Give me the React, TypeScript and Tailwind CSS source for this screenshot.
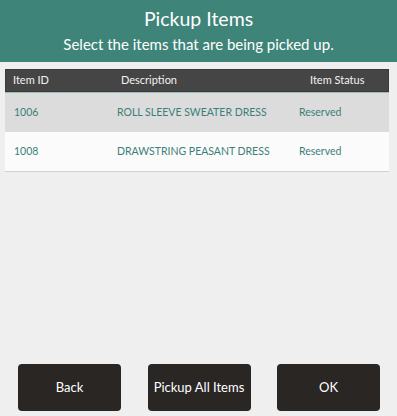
import React from 'react';

const items = [
  { id: '1006', description: 'ROLL SLEEVE SWEATER DRESS', status: 'Reserved' },
  { id: '1008', description: 'DRAWSTRING PEASANT DRESS', status: 'Reserved' },
];

const font = { fontFamily: 'Lato, "Noto Sans", sans-serif' };

export default function App() {
  return (
    <div className="w-[397px] h-[416px] flex flex-col bg-[#efefef] overflow-hidden" style={font}>
      {/* Title bar */}
      <div className="h-[62px] bg-[#3e8479] flex flex-col items-center text-white">
        <div className="text-[19.5px] leading-[24px] mt-[7px]">Pickup Items</div>
        <div className="text-[15px] leading-[20px] mt-[3px]">Select the items that are being picked up.</div>
      </div>

      {/* Table */}
      <div className="mx-[5px] mt-[7px] w-[384px]">
        <div className="h-[23px] bg-[#464545] border border-[#3a3a3a] grid grid-cols-[112px_182px_1fr] items-center text-[11px] text-[#f2f2f2]">
          <div className="pl-[7px]">Item ID</div>
          <div className="pl-[3px]">Description</div>
          <div className="pl-[10px]">Item Status</div>
        </div>
        <div className="h-px bg-[#9bbcb6]" />
        {items.map((item, i) => (
          <div
            key={item.id}
            className={`h-[39px] grid grid-cols-[112px_182px_1fr] items-center text-[10.5px] text-[#3b7f79] ${
              i === 0 ? 'bg-[#dcdcdc]' : 'bg-[#fbfbfb] border-b border-[#d2d2d2] h-[40px]'
            }`}
          >
            <div className="pl-[9px]">{item.id}</div>
            <div>{item.description}</div>
            <div>{item.status}</div>
          </div>
        ))}
      </div>

      <div className="flex-1" />

      {/* Buttons */}
      <div className="flex justify-between px-[18px] pb-[5px] pr-[17px]">
        {['Back', 'Pickup All Items', 'OK'].map((label) => (
          <button
            key={label}
            className="w-[103px] h-[47px] rounded-[4px] bg-[#2a2624] text-white text-[13px]"
          >
            {label}
          </button>
        ))}
      </div>
    </div>
  );
}
